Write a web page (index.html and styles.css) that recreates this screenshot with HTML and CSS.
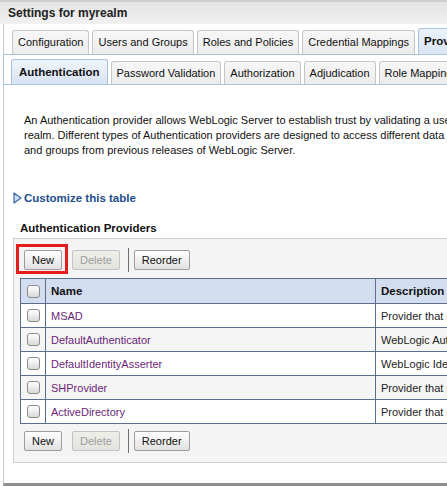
FILE: index.html
```html
<!DOCTYPE html>
<html>
<head>
<meta charset="utf-8">
<link rel="stylesheet" href="styles.css">
</head>
<body>
<div class="titlebar">Settings for myrealm</div>
<div class="frame">
  <div class="tabs1">
    <div class="tab">Configuration</div>
    <div class="tab">Users and Groups</div>
    <div class="tab">Roles and Policies</div>
    <div class="tab">Credential Mappings</div>
    <div class="tab sel">Providers</div>
    <div class="tab">Migration</div>
  </div>
  <div class="subpanel">
    <div class="tabs2">
      <div class="stab sel">Authentication</div>
      <div class="stab">Password Validation</div>
      <div class="stab">Authorization</div>
      <div class="stab">Adjudication</div>
      <div class="stab">Role Mapping</div>
      <div class="stab">Auditing</div>
    </div>
  </div>
  <div class="content">
    <p class="desc">An Authentication provider allows WebLogic Server to establish trust by validating a user. You must have one Authentication provider in a security<br>realm. Different types of Authentication providers are designed to access different data stores, such as LDAP servers or DBMS. You can also configure<br>and groups from previous releases of WebLogic Server.</p>
    <a class="customize" href="#"><svg class="tri" width="9" height="12" viewBox="0 0 9 12"><polygon points="1,1 8,6 1,11" fill="#cddff4" stroke="#3b66a6" stroke-width="1.2" stroke-linejoin="round"/></svg>Customize this table</a>
    <h3 class="heading">Authentication Providers</h3>
    <div class="box">
      <div class="toolbar">
        <span class="btn hl">New<span class="redbox"></span></span>
        <span class="btn dis">Delete</span>
        <span class="sep"></span>
        <span class="btn">Reorder</span>
      </div>
      <table class="grid">
        <thead>
          <tr><th class="c1"><span class="cb"></span></th><th class="c2">Name</th><th class="c3">Description</th></tr>
        </thead>
        <tbody>
          <tr><td class="c1"><span class="cb"></span></td><td class="c2"><a href="#">MSAD</a></td><td class="c3">Provider that performs LDAP authentication</td></tr>
          <tr class="alt"><td class="c1"><span class="cb"></span></td><td class="c2"><a href="#">DefaultAuthenticator</a></td><td class="c3">WebLogic Authentication Provider</td></tr>
          <tr><td class="c1"><span class="cb"></span></td><td class="c2"><a href="#">DefaultIdentityAsserter</a></td><td class="c3">WebLogic Identity Assertion provider</td></tr>
          <tr class="alt"><td class="c1"><span class="cb"></span></td><td class="c2"><a href="#">SHProvider</a></td><td class="c3">Provider that performs LDAP authentication</td></tr>
          <tr><td class="c1"><span class="cb"></span></td><td class="c2"><a href="#">ActiveDirectory</a></td><td class="c3">Provider that performs LDAP authentication</td></tr>
        </tbody>
      </table>
      <div class="toolbar bottom">
        <span class="btn">New</span>
        <span class="btn dis">Delete</span>
        <span class="sep"></span>
        <span class="btn">Reorder</span>
      </div>
    </div>
  </div>
</div>
</body>
</html>
```
FILE: styles.css
```css
html, body {
  margin: 0;
  padding: 0;
}
body {
  width: 447px;
  height: 486px;
  overflow: hidden;
  background: #fff;
  font-family: "Liberation Sans", Arial, sans-serif;
  font-size: 11px;
  color: #000;
}
.titlebar {
  width: 900px;
  height: 22px;
  border-top: 2px solid #cfcfcf;
  background: linear-gradient(#e3e3e3, #f1f1f1);
  font-weight: bold;
  font-size: 12px;
  line-height: 22px;
  padding-left: 8px;
  color: #222;
}
.frame {
  margin-left: 3px;
  width: 900px;
  height: 459px;
  border-left: 1px solid #c9c9c9;
  border-bottom: 3px solid #8e8e8e;
}
.tabs1 {
  height: 30px;
  display: flex;
  align-items: flex-end;
  gap: 3px;
  padding-left: 8px;
}
.tab {
  box-sizing: border-box;
  height: 24px;
  padding: 0 5px;
  border: 1px solid #c6c6c6;
  border-bottom: none;
  border-radius: 3px 3px 0 0;
  background: linear-gradient(#f7f7f7, #ececec);
  line-height: 23px;
  white-space: nowrap;
  color: #111;
}
.tab.sel {
  height: 26px;
  line-height: 25px;
  background: linear-gradient(#eaf1f9, #dbe6f3);
  border-color: #a9c1de;
  font-weight: bold;
  font-size: 11.5px;
}
.subpanel {
  margin-left: -1px;
  height: 29px;
  border-top: 1px solid #a9c4e2;
  border-bottom: 1px solid #a9c4e2;
  border-left: 1px solid #a9c4e2;
}
.tabs2 {
  height: 29px;
  display: flex;
  align-items: flex-end;
  gap: 3px;
  padding-left: 7px;
}
.stab {
  box-sizing: border-box;
  height: 23px;
  padding: 0 5px;
  border: 1px solid #c6c6c6;
  border-bottom: none;
  border-radius: 3px 3px 0 0;
  background: linear-gradient(#f7f7f7, #ececec);
  line-height: 22px;
  white-space: nowrap;
  color: #111;
}
.stab.sel {
  height: 25px;
  line-height: 25px;
  padding: 0 7px;
  background: linear-gradient(#f0f5fb, #d7e3f2);
  border-color: #a9c1de;
  font-weight: bold;
  font-size: 11.5px;
}
.content {
  padding-left: 9px;
}
.desc {
  margin: 28px 0 0 11px;
  line-height: 15px;
  white-space: nowrap;
  color: #111;
}
.customize {
  display: flex;
  align-items: center;
  gap: 2px;
  margin-top: 32px;
  height: 15px;
  color: #1d4d8a;
  font-weight: bold;
  font-size: 11.5px;
  text-decoration: none;
}
.tri {
  display: block;
}
.heading {
  margin: 16px 0 2px 7px;
  font-size: 11.5px;
  line-height: 15px;
  font-weight: bold;
  color: #111;
}
.box {
  width: 800px;
  border: 1px solid #cfcfcf;
  background: #f4f4f4;
  padding: 9px 0 9px 6px;
}
.toolbar {
  display: flex;
  align-items: center;
  height: 24px;
  padding-left: 4px;
}
.toolbar.bottom {
  margin-top: 5px;
}
.btn {
  position: relative;
  box-sizing: border-box;
  height: 20px;
  padding: 0 7px;
  border: 1px solid #9d9d9d;
  border-radius: 2px;
  background: linear-gradient(#ffffff, #e1e1e1);
  line-height: 18px;
  color: #111;
  margin-right: 10px;
  white-space: nowrap;
}
.btn.dis {
  color: #9c9c9c;
  border-color: #c3c3c3;
  background: linear-gradient(#efefea, #e3e3de);
  margin-right: 8px;
}
.sep {
  width: 1px;
  height: 24px;
  background: #6f6f6f;
  margin-right: 5px;
}
.redbox {
  position: absolute;
  left: -9px;
  top: -7px;
  width: 46px;
  height: 24px;
  border: 3px solid #e41c1c;
}
.grid {
  margin-top: 6px;
  table-layout: fixed;
  border-collapse: separate;
  border-spacing: 0;
  width: 755px;
  border-top: 1px solid #5b6e8b;
  border-left: 1px solid #5b6e8b;
}
.grid th, .grid td {
  box-sizing: border-box;
  padding: 0 0 0 5px;
  border-right: 1px solid #5b6e8b;
  border-bottom: 1px solid #5b6e8b;
  text-align: left;
  white-space: nowrap;
  overflow: hidden;
  vertical-align: middle;
}
.grid th {
  height: 25px;
  background: #d2deef;
  font-weight: bold;
  font-size: 11.5px;
  color: #111;
}
.grid td {
  height: 24px;
  background: #fff;
  color: #222;
}
.grid tr.alt td {
  background: #f5f5f5;
}
.grid .c1 {
  width: 25px;
  padding-left: 6px;
}
.grid .c2 {
  width: 330px;
}
.grid .c3 {
  width: 400px;
}
.grid td a {
  color: #6b1f78;
  text-decoration: none;
}
.cb {
  display: block;
  box-sizing: border-box;
  width: 13px;
  height: 13px;
  border: 1px solid #8c8c8c;
  border-radius: 3px;
  background: linear-gradient(#ffffff, #d9d9d9);
}
```
